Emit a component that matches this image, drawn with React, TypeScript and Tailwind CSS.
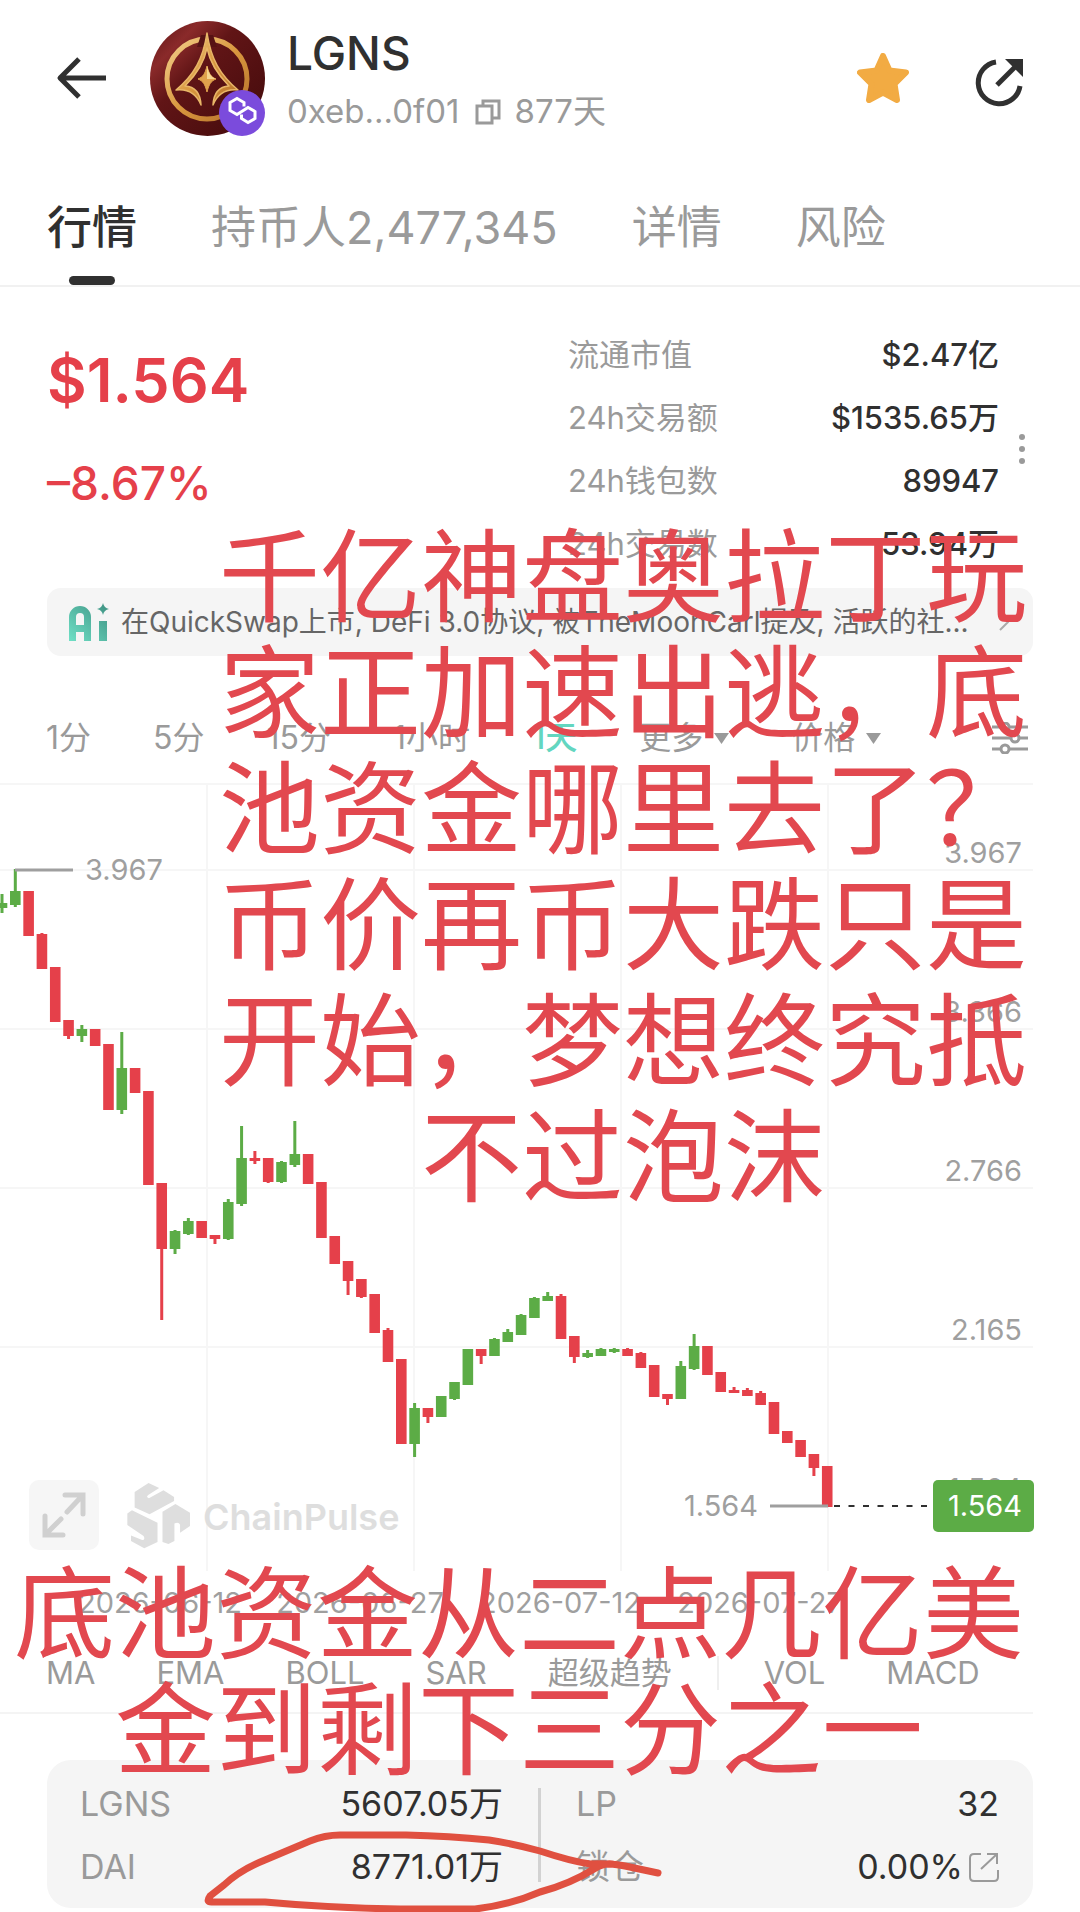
import React from 'react';

type Candle = [up: 0 | 1, high: number, top: number, bottom: number, low: number];

const STEP = 13.31;
const CANDLES: Candle[] = [
  [1, 894, 903, 908, 913],
  [1, 869, 891, 905, 907],
  [0, 891, 891, 936, 936],
  [0, 933, 934, 969, 969],
  [0, 967, 967, 1022, 1022],
  [0, 1020, 1020, 1036, 1039],
  [1, 1025, 1029, 1036, 1042],
  [0, 1029, 1029, 1046, 1046],
  [0, 1044, 1044, 1110, 1110],
  [1, 1032, 1068, 1110, 1114],
  [0, 1068, 1068, 1093, 1093],
  [0, 1091, 1091, 1185, 1185],
  [0, 1183, 1183, 1249, 1320],
  [1, 1230, 1231, 1249, 1254],
  [1, 1218, 1221, 1234, 1235],
  [0, 1221, 1221, 1238, 1238],
  [0, 1235, 1235, 1239, 1244],
  [1, 1199, 1202, 1239, 1240],
  [1, 1126, 1158, 1204, 1206],
  [0, 1151, 1158, 1161, 1164],
  [0, 1158, 1158, 1182, 1183],
  [1, 1161, 1162, 1182, 1183],
  [1, 1121, 1154, 1165, 1167],
  [0, 1154, 1154, 1184, 1184],
  [0, 1182, 1182, 1238, 1238],
  [0, 1236, 1236, 1264, 1264],
  [0, 1261, 1261, 1281, 1295],
  [0, 1279, 1279, 1297, 1298],
  [0, 1294, 1294, 1333, 1333],
  [0, 1328, 1330, 1362, 1362],
  [0, 1359, 1359, 1444, 1444],
  [1, 1403, 1408, 1444, 1457],
  [0, 1408, 1408, 1417, 1423],
  [1, 1396, 1396, 1417, 1417],
  [1, 1382, 1382, 1399, 1400],
  [1, 1349, 1349, 1385, 1385],
  [0, 1349, 1349, 1356, 1364],
  [1, 1338, 1339, 1356, 1356],
  [1, 1329, 1332, 1342, 1342],
  [1, 1314, 1315, 1335, 1335],
  [1, 1297, 1298, 1318, 1318],
  [1, 1292, 1296, 1301, 1301],
  [0, 1294, 1296, 1339, 1339],
  [0, 1336, 1336, 1357, 1363],
  [1, 1350, 1353, 1357, 1358],
  [1, 1348, 1349, 1356, 1356],
  [1, 1348, 1349, 1352, 1353],
  [0, 1348, 1349, 1356, 1356],
  [0, 1352, 1353, 1368, 1368],
  [0, 1365, 1365, 1397, 1397],
  [0, 1394, 1394, 1399, 1405],
  [1, 1361, 1366, 1399, 1399],
  [1, 1334, 1346, 1369, 1370],
  [0, 1346, 1346, 1375, 1375],
  [0, 1372, 1372, 1392, 1392],
  [0, 1387, 1390, 1393, 1393],
  [0, 1388, 1390, 1396, 1396],
  [0, 1391, 1393, 1405, 1405],
  [0, 1402, 1402, 1434, 1434],
  [0, 1431, 1431, 1443, 1443],
  [0, 1440, 1440, 1457, 1457],
  [0, 1454, 1454, 1468, 1476],
  [0, 1466, 1466, 1507, 1507],
];

const H_LINES = [784, 870, 1029, 1188, 1347];
const V_LINES = [207, 414, 621, 828];
const PRICES: [string, number][] = [
  ['3.967', 863],
  ['3.366', 1022],
  ['2.766', 1181],
  ['2.165', 1340],
  ['1.564', 1499],
];
const DATES: [string, number][] = [
  ['2026-06-12', 160],
  ['2026-06-27', 360],
  ['2026-07-12', 560],
  ['2026-07-27', 760],
];

const STATS = [
  ['流通市值', '$2.47亿'],
  ['24h交易额', '$1535.65万'],
  ['24h钱包数', '89947'],
  ['24h交易数', '53.94万'],
];

function TokenLogo() {
  return (
    <svg viewBox="0 0 115 115" className="size-[115px]" aria-label="LGNS">
      <defs>
        <linearGradient id="maroon" x1="0" y1="0" x2="1" y2="1">
          <stop offset="0" stopColor="#5a1213" />
          <stop offset="0.22" stopColor="#8a2a2a" />
          <stop offset="0.4" stopColor="#611516" />
          <stop offset="1" stopColor="#420a0b" />
        </linearGradient>
        <linearGradient id="gold" x1="0" y1="0" x2="1" y2="1">
          <stop offset="0" stopColor="#f3cf8c" />
          <stop offset="0.5" stopColor="#d9983f" />
          <stop offset="1" stopColor="#b5702a" />
        </linearGradient>
      </defs>
      <circle cx="57.5" cy="57.5" r="57.5" fill="url(#maroon)" />
      <circle cx="57" cy="58" r="40" fill="none" stroke="url(#gold)" strokeWidth="5" />
      <path d="M51 14h12l4 12H47z" fill="#571214" />
      <path
        d="M57 12C53 38 44 54 26 69Q44 67 51 84Q50 66 35 65C47 53 54 42 57 27C60 42 67 53 79 65Q64 66 63 84Q70 67 88 69C70 54 61 38 57 12Z"
        fill="url(#gold)"
        stroke="#e8b668"
        strokeWidth="1.500"
        strokeLinejoin="round"
      />
      <path d="M57 45C59 53 61 56 66 58C61 60 59 63 57 71C55 63 53 60 48 58C53 56 55 53 57 45Z" fill="#e0a24c" stroke="#e0a24c" strokeLinejoin="round" />
      <path d="M57 45C59 53 61 56 66 58H57Z" fill="#f6d68f" />
      <circle cx="92" cy="92" r="23" fill="#7b4bdc" />
      <path
        d="M94 85.500V81.500L87 77.500L80 81.500V89.500L87 93.500L98 86.500L105 90.500V97.500L98 101.500L91.500 97.500V93.500"
        fill="none"
        stroke="#fff"
        strokeWidth="3"
      />
    </svg>
  );
}

function Header() {
  return (
    <header className="flex h-[156px] items-center pl-[56px] pr-[57px]">
      <button aria-label="返回" className="text-[#303030]">
        <svg viewBox="0 0 50 42" className="h-[42px] w-[50px]" fill="none" stroke="currentColor" strokeWidth="5">
          <path d="M50 21H4M23 2L4 21L23 40" strokeLinejoin="round" />
        </svg>
      </button>
      <div className="ml-11">
        <TokenLogo />
      </div>
      <div className="ml-[22px] pt-2">
        <h1 className="text-[46px] leading-[58px] font-medium text-[#303030]">LGNS</h1>
        <div className="flex items-center text-[33px] leading-[58px] text-[#9a9a9a]">
          <span>0xeb...0f01</span>
          <button aria-label="复制" className="mx-[14px]">
            <svg viewBox="0 0 27 27" className="size-[27px]" fill="none" stroke="currentColor" strokeWidth="3">
              <path d="M3 8H18V25H3ZM9 8V3H25V20H18" />
            </svg>
          </button>
          <span>877天</span>
        </div>
      </div>
      <button aria-label="收藏" className="ml-auto text-[#f2ab43]">
        <svg viewBox="0 0 52 50" className="h-[50px] w-[52px]" fill="currentColor" stroke="currentColor" strokeWidth="6" strokeLinejoin="round">
          <path d="M26 3L32.500 17.500L49 19.500L37.500 31L40 47L26 39.500L12 47L14.500 31L3 19.500L19.500 17.500Z" />
        </svg>
      </button>
      <button aria-label="分享" className="mt-[10px] ml-[66px] text-[#303030]">
        <svg viewBox="0 0 48 48" className="size-[48px]" fill="none" stroke="currentColor" strokeWidth="5">
          <path d="M21 3A21 21 0 1 0 45 27" />
          <path d="M22 26L40 8" />
          <path d="M30 0H48V18Z" fill="currentColor" stroke="none" />
        </svg>
      </button>
    </header>
  );
}

function Tabs() {
  return (
    <nav className="flex gap-[74px] border-b-2 border-[#f1f1f1] px-[47px] text-[45px] leading-[68px] text-[#9a9a9a]">
      <button className="relative pt-[38px] pb-[23px] font-medium text-[#303030]">
        行情
        <span className="absolute bottom-0 left-1/2 h-[9px] w-[46px] -translate-x-1/2 rounded-full bg-[#303030]" />
      </button>
      <button className="pt-[38px] pb-[23px]">持币人2,477,345</button>
      <button className="pt-[38px] pb-[23px]">详情</button>
      <button className="pt-[38px] pb-[23px]">风险</button>
    </nav>
  );
}

function Summary() {
  return (
    <section className="flex pt-9 pr-[55px] pl-[47px]">
      <div className="text-[#e5404a]">
        <div className="pt-[17px] text-[61px] leading-[80px] font-semibold">$1.564</div>
        <div className="pt-[33px] text-[46px] leading-[60px] font-medium">–8.67%</div>
      </div>
      <dl className="ml-auto w-[431px]">
        {STATS.map(([label, value]) => (
          <div key={label} className="flex justify-between text-[31px] leading-[63px]">
            <dt className="text-[#9a9a9a]">{label}</dt>
            <dd className="font-medium text-[#303030]">{value}</dd>
          </div>
        ))}
      </dl>
      <button aria-label="更多数据" className="ml-[20px] flex flex-col items-center justify-center gap-[6px]">
        <span className="size-[6px] rounded-full bg-[#9a9a9a]" />
        <span className="size-[6px] rounded-full bg-[#9a9a9a]" />
        <span className="size-[6px] rounded-full bg-[#9a9a9a]" />
      </button>
    </section>
  );
}

function AiBanner() {
  return (
    <button className="mx-[47px] mt-[13px] flex h-[68px] items-center rounded-[14px] bg-[#f5f5f5] pr-6 pl-[22px] text-left">
      <svg viewBox="0 0 40 38" className="h-[38px] w-[40px] shrink-0">
        <defs>
          <linearGradient id="teal" x1="0" y1="1" x2="1" y2="0">
            <stop offset="0" stopColor="#6fe0c6" />
            <stop offset="1" stopColor="#3d8f80" />
          </linearGradient>
        </defs>
        <path
          d="M0 38V14A11 11 0 0 1 22 14V38H15V29H7V38ZM7 22H15V14A4 4 0 0 0 7 14ZM30 18H38V38H30ZM34 0Q35 5 40 6Q35 7 34 12Q33 7 28 6Q33 5 34 0Z"
          fill="url(#teal)"
          fillRule="evenodd"
        />
      </svg>
      <span className="ml-3 min-w-0 flex-1 truncate text-[28px] leading-[40px] text-[#666]">
        在QuickSwap上市, DeFi 3.0协议, 被TheMoonCarl提及, 活跃的社...
      </span>
      <svg viewBox="0 0 10 18" className="ml-3 h-[18px] w-[10px] shrink-0" fill="none" stroke="#aaa" strokeWidth="2">
        <path d="M1 1L9 9L1 17" />
      </svg>
    </button>
  );
}

function Caret() {
  return (
    <svg viewBox="0 0 15 11" className="h-[11px] w-[15px]" fill="currentColor">
      <path d="M0 0H15L7.500 11Z" />
    </svg>
  );
}

function Periods() {
  return (
    <div className="mt-[40px] flex h-[84px] items-center gap-[62px] pr-[52px] pl-[46px] text-[32px] text-[#9a9a9a]">
      <button>1分</button>
      <button>5分</button>
      <button>15分</button>
      <button>1小时</button>
      <button className="font-medium text-[#63d6c0]">1天</button>
      <button className="flex items-center gap-[11px]">
        更多
        <Caret />
      </button>
      <button className="flex items-center gap-[11px]">
        价格
        <Caret />
      </button>
      <button aria-label="图表设置" className="ml-auto">
        <svg viewBox="0 0 36 32" className="h-[32px] w-[36px]" fill="none" stroke="currentColor" strokeWidth="3">
          <path d="M0 5H9M17 5H36M0 16H19M27 16H36M0 27H9M17 27H36" />
          <circle cx="13" cy="5" r="4" />
          <circle cx="23" cy="16" r="4" />
          <circle cx="13" cy="27" r="4" />
        </svg>
      </button>
    </div>
  );
}

function Chart() {
  return (
    <div className="relative">
      <svg viewBox="0 780 1080 854" className="block w-full" fontSize="29" role="img" aria-label="LGNS 日线">
        <g stroke="#f6f6f6" strokeWidth="2">
          {H_LINES.map((y) => (
            <path key={y} d={`M0 ${y}H1033`} />
          ))}
          {V_LINES.map((x) => (
            <path key={x} d={`M${x} 784V1571`} />
          ))}
        </g>
        {CANDLES.map(([up, high, top, bottom, low], i) => {
          const x = 2 + i * STEP;
          return (
            <g key={i} fill={up ? '#5cac46' : '#e5404a'}>
              <rect x={x - 1.5} y={high} width="3" height={low - high} />
              <rect x={x - 5.3} y={top} width="10.6" height={bottom - top} />
            </g>
          );
        })}
        <g stroke="#9f9f9f" strokeWidth="3">
          <path d="M15 870H73M770 1506H828" />
        </g>
        <path d="M834 1506H930" stroke="#303030" strokeWidth="2" strokeDasharray="6 8.500" />
        <g fill="#9f9f9f">
          <text x="85" y="880">3.967</text>
          <text x="758" y="1516" textAnchor="end">1.564</text>
          {PRICES.map(([label, y]) => (
            <text key={label} x="1022" y={y} textAnchor="end">{label}</text>
          ))}
          {DATES.map(([label, x]) => (
            <text key={label} x={x} y="1613" textAnchor="middle">{label}</text>
          ))}
        </g>
        <rect x="933" y="1480" width="101" height="52" rx="5" fill="#5cac46" />
        <text x="1022" y="1516" textAnchor="end" fill="#fff">1.564</text>
      </svg>
      <div className="absolute bottom-[84px] left-[29px] flex items-center">
        <button aria-label="全屏" className="flex size-[70px] items-center justify-center rounded-[10px] bg-[#f6f6f6]">
          <svg viewBox="0 0 44 46" className="h-[46px] w-[44px]" fill="none" stroke="#d0d0d0" strokeWidth="5" strokeLinecap="round">
            <path d="M23 3H41V22M40 4L25 20M3 24V43H21M4 42L19 27" />
          </svg>
        </button>
        <svg viewBox="320 28 190 200" className="ml-7 h-[67px] w-[63px]" fill="#dedede">
          <path d="M343 57L385 30L417 45L384 66Q376 72 386 76L430 52L462 72V84L388 124L343 104Z" />
          <path d="M335 112L412 150V208L372 227L332 205V188L366 202Q376 202 370 190L321 157V122Z" />
          <path d="M427 117L466 93L510 120V160L480 180V156Q476 146 463 152V205L445 214L427 208Z" />
        </svg>
        <span className="ml-[13px] pt-1 text-[36px] leading-[44px] font-semibold text-[#dedede]">ChainPulse</span>
      </div>
    </div>
  );
}

function Indicators() {
  return (
    <div className="mr-[47px] flex h-[80px] items-center gap-[61px] border-b-2 border-[#f4f4f4] pl-[46px] text-[31px] whitespace-nowrap text-[#9a9a9a]">
      <button>MA</button>
      <button>EMA</button>
      <button>BOLL</button>
      <button>SAR</button>
      <button>超级趋势</button>
      <div className="-mx-4 h-[34px] w-[2px] bg-[#efefef]" />
      <button>VOL</button>
      <button>MACD</button>
    </div>
  );
}

function PoolCard() {
  return (
    <section className="mx-[47px] mt-[46px] mb-1 flex rounded-[24px] bg-[#f5f5f5] pt-3 pr-[34px] pb-[10px] pl-[33px] text-[34px] leading-[63px] text-[#303030]">
      <dl className="flex-1">
        <div className="flex justify-between">
          <dt className="text-[#9a9a9a]">LGNS</dt>
          <dd>5607.05万</dd>
        </div>
        <div className="flex justify-between">
          <dt className="text-[#9a9a9a]">DAI</dt>
          <dd>8771.01万</dd>
        </div>
      </dl>
      <div className="mx-[35px] my-[16px] w-[3px] bg-[#d2d2d2]" />
      <dl className="flex-1">
        <div className="flex justify-between">
          <dt className="text-[#9a9a9a]">LP</dt>
          <dd>32</dd>
        </div>
        <div className="flex justify-between">
          <dt className="text-[#9a9a9a]">锁仓</dt>
          <dd className="flex items-center">
            0.00%
            <a href="#lock" aria-label="锁仓详情" className="ml-[6px]">
              <svg viewBox="0 0 30 30" className="size-[30px]" fill="none" stroke="#9a9a9a" strokeWidth="2">
                <path d="M12 2H5Q1 2 1 6V25Q1 29 5 29H25Q29 29 29 25V18M12 17L28 2M18 2H28V12" />
              </svg>
            </a>
          </dd>
        </div>
      </dl>
    </section>
  );
}

function Annotations() {
  return (
    <div className="pointer-events-none absolute inset-0 text-center text-[101px] leading-[116px] whitespace-nowrap text-[#e2484f]">
      <p className="absolute top-[519px] right-[53px]">
        千亿神盘奥拉丁玩
        <br />
        家正加速出逃，底
        <br />
        池资金哪里去了？
        <br />
        币价再币大跌只是
        <br />
        开始，梦想终究抵
        <br />
        不过泡沫
      </p>
      <p className="absolute top-[1556px] right-[56px]">
        底池资金从二点几亿美
        <br />
        金到剩下三分之一
      </p>
      <svg viewBox="200 1825 470 87" className="absolute bottom-0 left-[200px] h-[87px] w-[470px]" fill="none" stroke="#e05040" strokeWidth="7" strokeLinecap="round" strokeLinejoin="round">
        <path d="M658 1873L625 1866Q610 1863 590 1864Q570 1861 540 1851Q515 1844 489 1840Q450 1836 406 1835H340Q325 1835 310 1841L265 1860Q240 1870 224 1885L210 1896Q205 1903 213 1902H265Q330 1908 400 1909H475Q510 1905 540 1892Q570 1884 594 1869Q604 1863 612 1864" />
      </svg>
    </div>
  );
}

export default function App() {
  return (
    <main className="relative flex min-h-screen flex-col overflow-hidden bg-white font-['Inter','Noto_Sans_CJK_SC',sans-serif]">
      <Header />
      <Tabs />
      <Summary />
      <AiBanner />
      <Periods />
      <Chart />
      <Indicators />
      <PoolCard />
      <Annotations />
    </main>
  );
}
